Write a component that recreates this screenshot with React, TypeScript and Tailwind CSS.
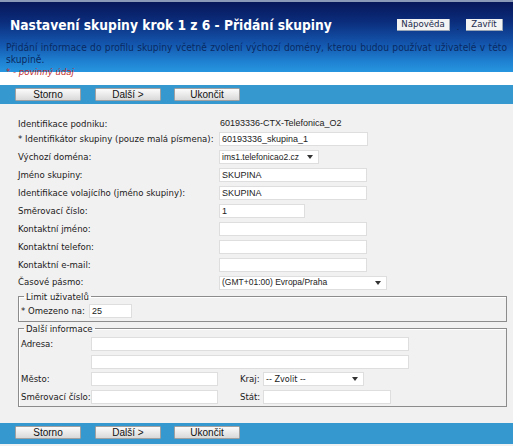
import React from "react";

const F = "font-['DejaVu_Sans_Condensed','DejaVu_Sans',sans-serif]";
const A = "font-['Liberation_Sans',Arial,sans-serif]";

function Btn({ children }: { children: React.ReactNode }) {
  return (
    <div
      className={`w-[66px] h-[13px] flex items-center justify-center border border-[#a0a0a0] rounded-[1px] bg-[linear-gradient(#fbfbfb,#d9d9d9)] ${A} text-[10px] leading-none text-[#111]`}
    >
      {children}
    </div>
  );
}

function Input({ w, value }: { w: string; value?: string }) {
  return (
    <div
      className={`${w} h-[14px] bg-white border border-[#dedede] flex items-center pl-[2px] ${A} text-[9px] leading-none text-[#222]`}
    >
      {value}
    </div>
  );
}

function Select({ w, value, f }: { w: string; value: string; f?: string }) {
  return (
    <div
      className={`${w} h-[14px] bg-white border border-[#dedede] flex items-center justify-between pl-[2px] pr-[5px] ${f ?? `${A} text-[8.5px]`} leading-none text-[#222]`}
    >
      <span>{value}</span>
      <svg width="6" height="4" viewBox="0 0 6 4">
        <path d="M0 0 L6 0 L3 4 Z" fill="#333" />
      </svg>
    </div>
  );
}

function Row({
  label,
  children,
  h = "h-[18px]",
}: {
  label: string;
  children?: React.ReactNode;
  h?: string;
}) {
  return (
    <div className={`flex items-center ${h}`}>
      <div className={`w-[201px] ${F} text-[9.5px] text-[#1a1a1a] whitespace-nowrap`}>{label}</div>
      {children}
    </div>
  );
}

function Bar({ h }: { h: string }) {
  return (
    <div className={`${h} bg-[#3598cf] flex items-start pt-[3px] pl-[15px]`}>
      <Btn>Storno</Btn>
      <div className="ml-[14px]">
        <Btn>Další &gt;</Btn>
      </div>
      <div className="ml-[13px]">
        <Btn>Ukončit</Btn>
      </div>
    </div>
  );
}

export default function App() {
  return (
    <div className="w-[513px] h-[446px] overflow-hidden bg-[#f2f1f1]">
      {/* header */}
      <div className="bg-white bg-[linear-gradient(to_bottom,#8a99b8_0px,#8a99b8_2px,#07175a_2px,#0b2d7c_22px,#1458b0_45px,#1f82d2_62px,#2796e0_72px)] bg-no-repeat bg-[length:100%_72px] pt-[16px] pb-[8px] px-[6px]">
        <div className="flex items-center h-[18px]">
          <div className={`${F} font-bold text-[13.7px] text-white pl-[4px] whitespace-nowrap`}>
            Nastavení skupiny krok 1 z 6 - Přidání skupiny
          </div>
          <div className="ml-auto flex items-center pr-[4px] -mt-[1px]">
            <div className={`w-[53px] h-[12px] bg-[#f3f3f3] border-r border-b border-[#9aa5b5] flex items-center justify-center ${F} text-[9.5px] leading-none text-[#1a2a4a]`}>
              Nápověda
            </div>
            <div className="w-[16px] h-[12px] flex items-end justify-center text-[#0a2050] text-[9px] leading-none">.</div>
            <div className={`w-[37px] h-[12px] bg-[#f3f3f3] border-r border-b border-[#9aa5b5] flex items-center justify-center ${F} text-[9.5px] leading-none text-[#1a2a4a]`}>
              Zavřít
            </div>
          </div>
        </div>
        <div className={`mt-[8px] ${F} text-[10.2px] leading-[12px] text-[#0a2a62] text-justify`}>
          Přidání informace do profilu skupiny včetně zvolení výchozí domény, kterou budou používat uživatelé v této skupině.
        </div>
        <div className={`${F} italic text-[9.5px] leading-[11px] text-[#c02a2a]`}>* - povinný údaj</div>
      </div>

      <Bar h="h-[19px]" />

      {/* form */}
      <div className="pl-[18px] pt-[14px]">
        <Row label="Identifikace podniku:" h="h-[12px]">
          <span className={`${A} text-[9px] text-[#222] pl-[1px]`}>60193336-CTX-Telefonica_O2</span>
        </Row>
        <Row label="* Identifikátor skupiny (pouze malá písmena):">
          <Input w="w-[149px]" value="60193336_skupina_1" />
        </Row>
        <Row label="Výchozí doména:">
          <Select w="w-[100px]" value="ims1.telefonicao2.cz" />
        </Row>
        <Row label="Jméno skupiny:">
          <Input w="w-[148px]" value="SKUPINA" />
        </Row>
        <Row label="Identifikace volajícího (jméno skupiny):">
          <Input w="w-[148px]" value="SKUPINA" />
        </Row>
        <Row label="Směrovací číslo:">
          <Input w="w-[86px]" value="1" />
        </Row>
        <Row label="Kontaktní jméno:">
          <Input w="w-[148px]" />
        </Row>
        <Row label="Kontaktní telefon:">
          <Input w="w-[148px]" />
        </Row>
        <Row label="Kontaktní e-mail:">
          <Input w="w-[148px]" />
        </Row>
        <Row label="Časové pásmo:" h="h-[17px]">
          <Select w="w-[168px]" value="(GMT+01:00) Evropa/Praha" />
        </Row>

        <fieldset className="w-[489px] border border-[#8c8c8c] shadow-[inset_1px_1px_0_#fff] pl-[2px] pb-[1px]">
          <legend className={`ml-[3px] px-[2px] ${F} text-[9.5px] leading-[11px] text-[#1a1a1a]`}>Limit uživatelů</legend>
          <div className="flex items-center h-[18px]">
            <div className={`w-[68px] ${F} text-[9.5px] text-[#1a1a1a] whitespace-nowrap`}>* Omezeno na:</div>
            <Input w="w-[43px]" value="25" />
          </div>
        </fieldset>

        <fieldset className="mt-[1px] w-[489px] border border-[#8c8c8c] shadow-[inset_1px_1px_0_#fff] pl-[2px]">
          <legend className={`ml-[3px] px-[2px] ${F} text-[9.5px] leading-[11px] text-[#1a1a1a]`}>Další informace</legend>
          <div className="pt-[1px]">
            <div className="flex items-center h-[18px]">
              <div className={`w-[70px] ${F} text-[9.5px] text-[#1a1a1a]`}>Adresa:</div>
              <Input w="w-[318px]" />
            </div>
            <div className="flex items-center h-[17px]">
              <div className="w-[70px]" />
              <Input w="w-[318px]" />
            </div>
            <div className="flex items-center h-[18px]">
              <div className={`w-[70px] ${F} text-[9.5px] text-[#1a1a1a]`}>Město:</div>
              <Input w="w-[127px]" />
              <div className={`ml-[22px] w-[23px] ${F} text-[9.5px] text-[#1a1a1a]`}>Kraj:</div>
              <Select w="w-[101px]" value="-- Zvolit --" f={`${F} text-[9px]`} />
            </div>
            <div className="flex items-center h-[18px]">
              <div className={`w-[70px] ${F} text-[9.5px] text-[#1a1a1a] whitespace-nowrap`}>Směrovací číslo:</div>
              <Input w="w-[127px]" />
              <div className={`ml-[22px] w-[23px] ${F} text-[9.5px] text-[#1a1a1a]`}>Stát:</div>
              <Input w="w-[128px]" />
            </div>
          </div>
        </fieldset>
      </div>

      <div className="mt-[16px]">
        <Bar h="h-[21px]" />
      </div>
    </div>
  );
}
